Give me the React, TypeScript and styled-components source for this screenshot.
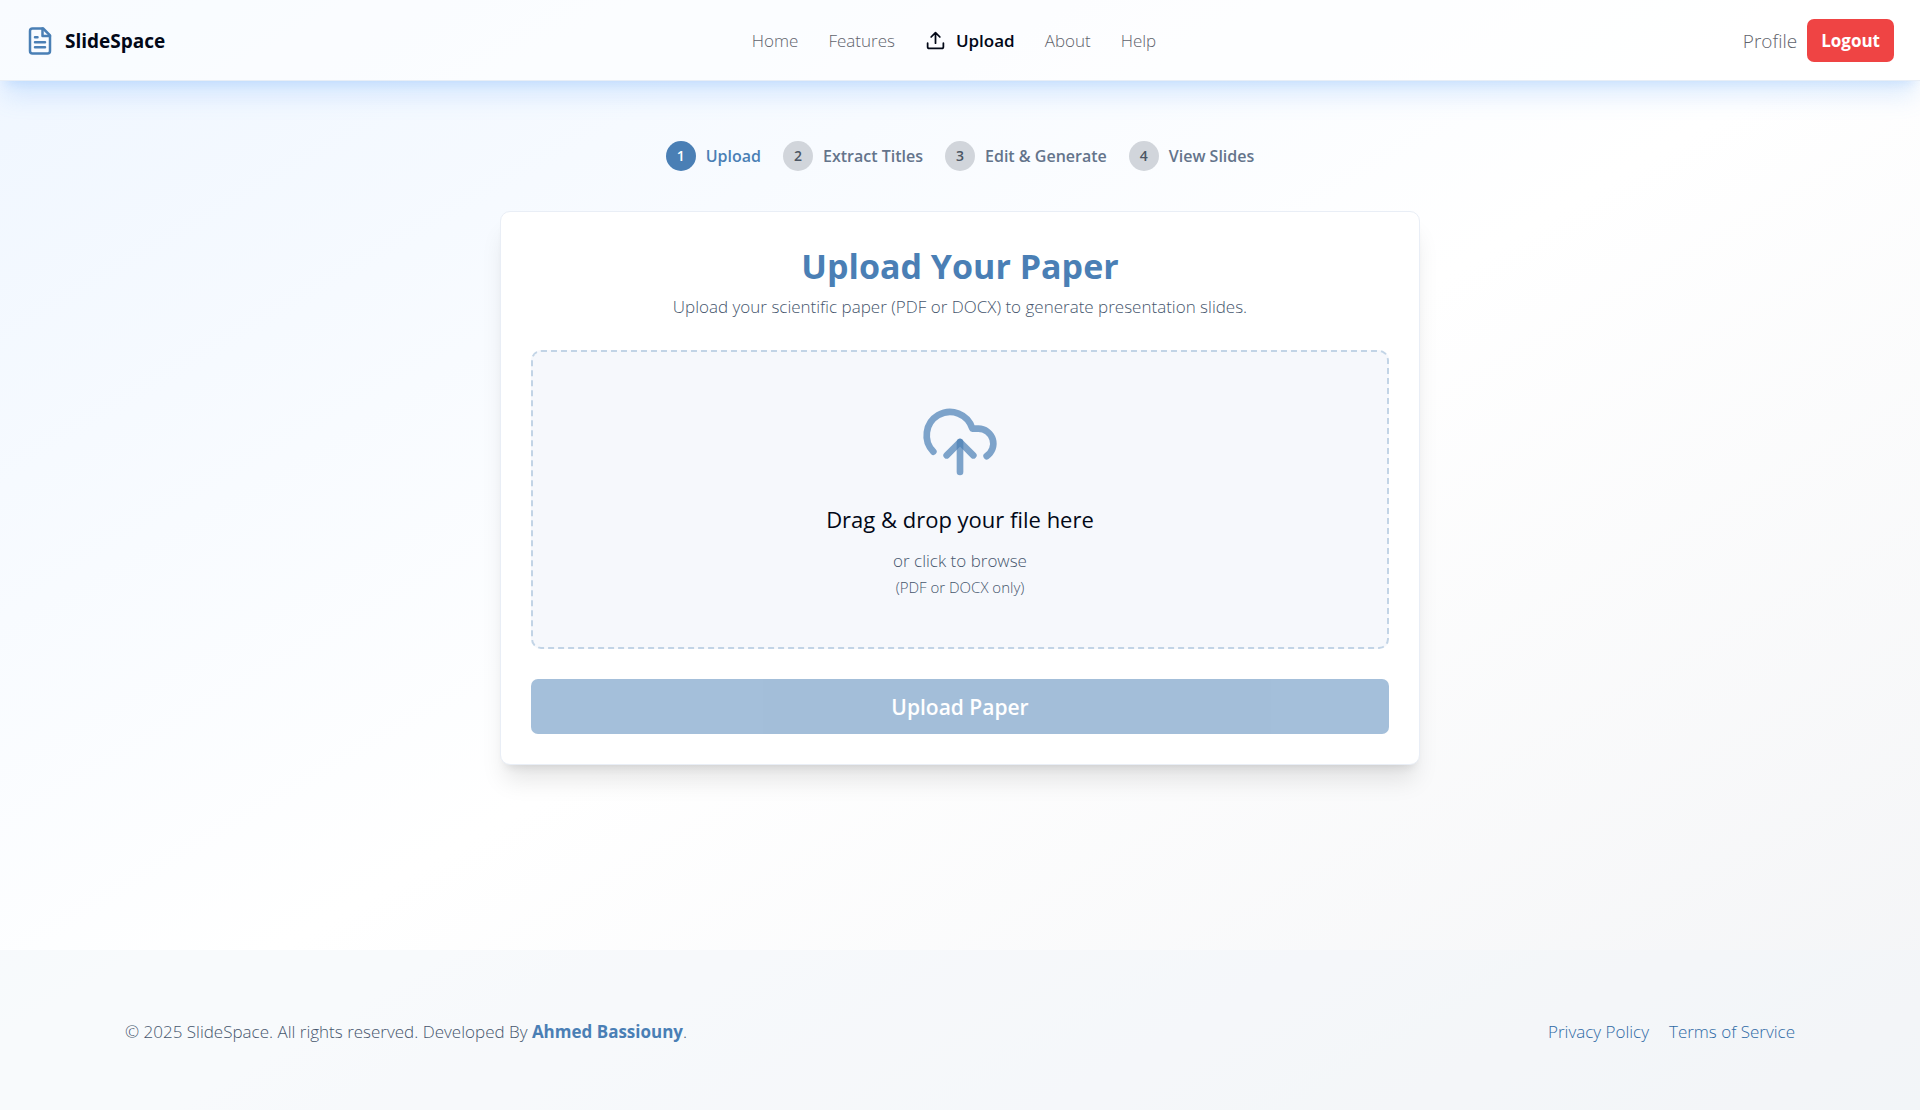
import React from "react";
import styled, { createGlobalStyle } from "styled-components";

const brand = "#4a7fb5";
const link = "#2f6aa5";
const ink = "#020817";
const muted = "#64748b";
const copy = "#46566d";
const navGrey = "#5f636c";

const GlobalStyle = createGlobalStyle`
  *, *::before, *::after { box-sizing: border-box; }
  body {
    margin: 0;
    font-family: "Open Sans", "Noto Sans", sans-serif;
    font-size: 17px;
    font-weight: 300;
    line-height: 26px;
    color: ${ink};
  }
  h1, h2, p, ol, ul { margin: 0; padding: 0; }
  a { color: inherit; text-decoration: none; }
  button { font: inherit; border: 0; cursor: pointer; }
  svg { display: block; flex: none; fill: none; stroke: currentColor; stroke-linecap: round; stroke-linejoin: round; }
`;

const Page = styled.div`
  min-height: 100vh;
  display: flex;
  flex-direction: column;
  background: linear-gradient(to bottom right, #eff6ff, #ffffff 50%, #f3f4f6);
`;

const Header = styled.header`
  display: flex;
  align-items: center;
  justify-content: space-between;
  height: 81px;
  padding: 1px 26px 0 25px;
  border-bottom: 1px solid #e8eef6;
  background: rgba(255, 255, 255, 0.6);
  box-shadow: 0 20px 25px -5px rgba(96, 165, 250, 0.2), 0 8px 10px -6px rgba(96, 165, 250, 0.2);
`;

const Brand = styled.a`
  display: flex;
  align-items: center;
  gap: 10px;
  font-size: 19px;
  font-weight: 700;
  svg { color: ${brand}; }
`;

const Nav = styled.nav`
  display: flex;
  align-items: center;
  gap: 30px;
`;

const NavLink = styled.a<{ $active?: boolean }>`
  display: flex;
  align-items: center;
  gap: 10px;
  color: ${(p) => (p.$active ? ink : navGrey)};
  font-weight: ${(p) => (p.$active ? 600 : 300)};
`;

const Account = styled.div`
  display: flex;
  align-items: center;
  gap: 10px;
`;

const ProfileLink = styled.a`
  color: ${navGrey};
  font-size: 19px;
`;

const Logout = styled.button`
  height: 43px;
  padding: 0 14px;
  border-radius: 7px;
  background: #ef4444;
  color: #ffffff;
  font-weight: 700;
`;

const Main = styled.main`
  flex: 1;
  display: flex;
  flex-direction: column;
  align-items: center;
  gap: 40px;
  padding: 60px 30px;
`;

const Steps = styled.ol`
  display: flex;
  gap: 22px;
  list-style: none;
`;

const Step = styled.li<{ $active?: boolean }>`
  display: flex;
  align-items: center;
  gap: 10px;
  color: ${(p) => (p.$active ? brand : muted)};
  font-size: 16px;
  font-weight: 600;
`;

const StepNumber = styled.span<{ $active?: boolean }>`
  display: grid;
  place-items: center;
  width: 30px;
  height: 30px;
  border-radius: 50%;
  background: ${(p) => (p.$active ? brand : "#d1d5db")};
  color: ${(p) => (p.$active ? "#ffffff" : "#4b5563")};
  font-size: 14px;
`;

const Card = styled.section`
  display: flex;
  flex-direction: column;
  gap: 30px;
  width: 100%;
  max-width: 920px;
  padding: 30px;
  border: 1px solid #e9eef6;
  border-radius: 10px;
  background: #ffffff;
  box-shadow: 0 20px 25px -5px rgba(0, 0, 0, 0.1), 0 8px 10px -6px rgba(0, 0, 0, 0.1);
`;

const CardHeader = styled.div`
  text-align: center;
  color: ${copy};
`;

const Title = styled.h1`
  padding-bottom: 4px;
  color: ${brand};
  font-size: 34px;
  line-height: 48px;
  font-weight: 700;
`;

const DropZone = styled.label`
  display: flex;
  flex-direction: column;
  align-items: center;
  padding: 50px 30px 47px;
  border: 2px dashed #c2d4e6;
  border-radius: 10px;
  background: #f6f8fc;
  color: ${copy};
  cursor: pointer;
  svg { color: rgba(74, 127, 181, 0.7); }
`;

const FileInput = styled.input`
  position: absolute;
  width: 1px;
  height: 1px;
  opacity: 0;
`;

const DropTitle = styled.span`
  padding: 21px 0 13px;
  color: ${ink};
  font-size: 22px;
  line-height: 32px;
  font-weight: 500;
`;

const Hint = styled.span`
  font-size: 15px;
`;

const Submit = styled.button`
  height: 55px;
  border-radius: 7px;
  background: ${brand};
  color: #ffffff;
  font-size: 21px;
  font-weight: 600;
  opacity: 0.5;
`;

const Footer = styled.footer`
  display: flex;
  align-items: center;
  justify-content: space-between;
  height: 160px;
  padding: 4px 125px 0;
  background: rgba(241, 245, 249, 0.5);
  color: ${copy};
`;

const Author = styled.a`
  color: ${brand};
  font-weight: 700;
`;

const FooterLinks = styled.nav`
  display: flex;
  gap: 20px;
  color: ${link};
`;

const FileIcon = () => (
  <svg width="30" height="30" viewBox="0 0 24 24" strokeWidth="2" aria-hidden="true">
    <path d="M14.5 2H6a2 2 0 0 0-2 2v16a2 2 0 0 0 2 2h12a2 2 0 0 0 2-2V7.5L14.5 2z" />
    <path d="M14 2v6h6M16 13H8M16 17H8M10 9H8" />
  </svg>
);

const UploadIcon = () => (
  <svg width="21" height="21" viewBox="0 0 24 24" strokeWidth="2" aria-hidden="true">
    <path d="M21 15v4a2 2 0 0 1-2 2H5a2 2 0 0 1-2-2v-4" />
    <path d="M17 8l-5-5-5 5M12 3v12" />
  </svg>
);

const CloudIcon = () => (
  <svg width="80" height="80" viewBox="0 0 24 24" strokeWidth="2" aria-hidden="true">
    <path d="M4 14.899A7 7 0 1 1 15.71 8h1.79a4.5 4.5 0 0 1 2.5 8.242" />
    <path d="M12 12v9" />
    <path d="m16 16-4-4-4 4" />
  </svg>
);

const steps = ["Upload", "Extract Titles", "Edit & Generate", "View Slides"];

export default function App() {
  return (
    <Page>
      <GlobalStyle />
      <Header>
        <Brand href="#"><FileIcon />SlideSpace</Brand>
        <Nav aria-label="Main">
          <NavLink href="#">Home</NavLink>
          <NavLink href="#">Features</NavLink>
          <NavLink href="#" $active aria-current="page"><UploadIcon />Upload</NavLink>
          <NavLink href="#">About</NavLink>
          <NavLink href="#">Help</NavLink>
        </Nav>
        <Account>
          <ProfileLink href="#">Profile</ProfileLink>
          <Logout type="button">Logout</Logout>
        </Account>
      </Header>
      <Main>
        <Steps>
          {steps.map((label, i) => (
            <Step key={label} $active={i === 0}>
              <StepNumber $active={i === 0}>{i + 1}</StepNumber>
              {label}
            </Step>
          ))}
        </Steps>
        <Card>
          <CardHeader>
            <Title>Upload Your Paper</Title>
            <p>Upload your scientific paper (PDF or DOCX) to generate presentation slides.</p>
          </CardHeader>
          <DropZone>
            <FileInput type="file" accept=".pdf,.docx" />
            <CloudIcon />
            <DropTitle>Drag &amp; drop your file here</DropTitle>
            <span>or click to browse</span>
            <Hint>(PDF or DOCX only)</Hint>
          </DropZone>
          <Submit type="button">Upload Paper</Submit>
        </Card>
      </Main>
      <Footer>
        <p>© 2025 SlideSpace. All rights reserved. Developed By <Author href="#">Ahmed Bassiouny</Author>.</p>
        <FooterLinks aria-label="Legal">
          <a href="#">Privacy Policy</a>
          <a href="#">Terms of Service</a>
        </FooterLinks>
      </Footer>
    </Page>
  );
}
